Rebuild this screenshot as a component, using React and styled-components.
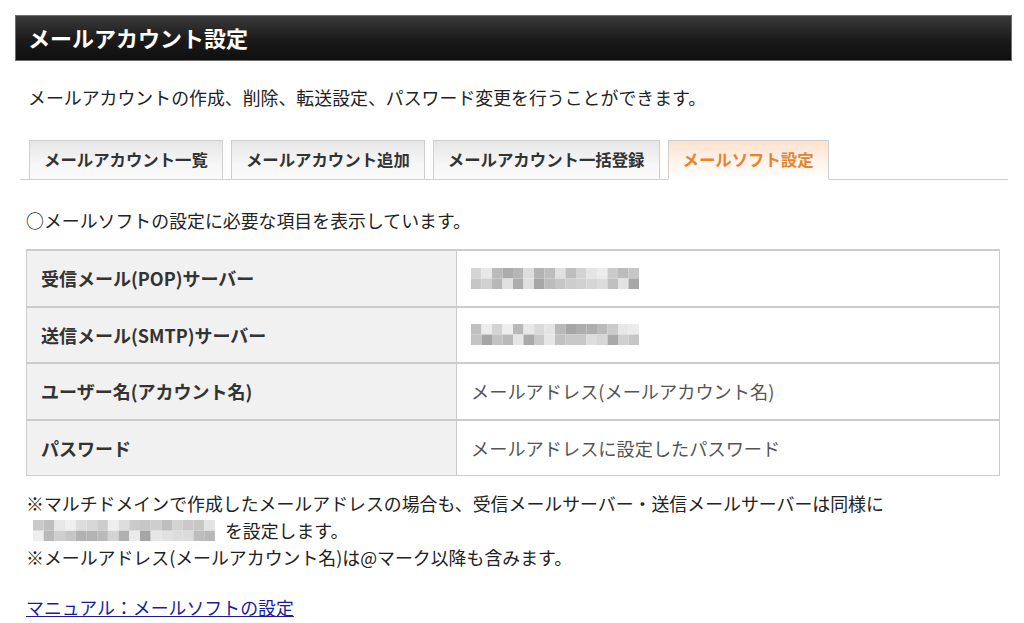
import React from 'react';
import styled, { createGlobalStyle } from 'styled-components';

const GlobalStyle = createGlobalStyle`
  body {
    margin: 0;
    background: #fff;
    font-family: "Noto Sans CJK JP", "Noto Sans", sans-serif;
    color: #333;
  }
`;

const Page = styled.div`
  width: 1024px;
  height: 623px;
  overflow: hidden;
  padding-top: 15px;
  box-sizing: border-box;
`;

const Header = styled.h1`
  margin: 0 12px 0 15px;
  height: 46px;
  box-sizing: border-box;
  border: 1px solid #6e6e6e;
  background: linear-gradient(#3a3a3a, #1a1a1a 55%, #0f0f0f);
  color: #fff;
  font-size: 22px;
  font-weight: 700;
  line-height: 43px;
  padding-left: 12px;
`;

const Lead = styled.p`
  margin: 23px 0 0 28px;
  font-size: 17.9px;
  line-height: 27px;
  color: #222;
`;

const TabBar = styled.div`
  display: flex;
  align-items: flex-end;
  gap: 8px;
  margin: 28px 16px 0 20px;
  padding-left: 9px;
  border-bottom: 1px solid #cfcfcf;
  height: 40px;
`;

const Tab = styled.div`
  height: 40px;
  box-sizing: border-box;
  padding: 0 14px;
  border: 1px solid #cfcfcf;
  border-bottom: ${p => (p.$active ? '1px solid #fff' : '1px solid #cfcfcf')};
  margin-bottom: -1px;
  background: ${p =>
    p.$active ? 'linear-gradient(#fde2cc, #fff5ee 60%, #fff)' : 'linear-gradient(#e6e6e6, #f6f6f6 60%, #fbfbfb)'};
  color: ${p => (p.$active ? '#e5842f' : '#333')};
  font-size: 16.4px;
  font-weight: 700;
  line-height: 37px;
  white-space: nowrap;
`;

const Content = styled.div`
  margin: 0 24px 0 26px;
`;

const Intro = styled.p`
  margin: 27px 0 0;
  font-size: 17.9px;
  line-height: 27px;
  color: #222;
`;

const Table = styled.table`
  margin-top: 15px;
  width: 974px;
  border-collapse: collapse;
  border: 1px solid #cccccc;
`;

const Label = styled.th`
  width: 401px;
  height: 54.5px;
  padding: 0 14px;
  background: #f1f1f1;
  border: 1px solid #cccccc;
  border-width: 2px 1px 0 1px;
  text-align: left;
  font-size: 18px;
  font-weight: 700;
  color: #333;
`;

const Value = styled.td`
  padding: 0 14px;
  border: 1px solid #cccccc;
  border-width: 2px 1px 0 1px;
  font-size: 18.2px;
  color: #555;
  background: #fff;
`;

const Notes = styled.div`
  margin-top: 14px;
  font-size: 17.9px;
  line-height: 27px;
  color: #222;
`;

const NoteLine = styled.div`
  display: flex;
  align-items: center;
  gap: ${p => (p.$gap ? '10px' : '0')};
  padding-left: ${p => (p.$indent ? '7px' : '0')};
`;

const ManualLink = styled.a`
  display: inline-block;
  margin-top: 23px;
  font-size: 17.9px;
  line-height: 27px;
  color: #1a1a9c;
  text-decoration: underline;
`;

const Blur = styled.svg`
  display: block;
  flex-shrink: 0;
`;

// pixelated (mosaic) placeholder for hidden host names
function Mosaic({ cols, rows, cell, seed }) {
  const rects = [];
  let s = seed;
  for (let r = 0; r < rows; r++) {
    for (let c = 0; c < cols; c++) {
      s = (s * 9301 + 49297) % 233280;
      const v = 165 + Math.floor((s / 233280) * 75);
      rects.push(
        <rect key={r + '-' + c} x={c * cell} y={r * cell} width={cell} height={cell} fill={`rgb(${v},${v},${v})`} />
      );
    }
  }
  return (
    <Blur width={cols * cell} height={rows * cell}>
      {rects}
    </Blur>
  );
}

const rows = [
  { label: '受信メール(POP)サーバー', blur: 11 },
  { label: '送信メール(SMTP)サーバー', blur: 29 },
  { label: 'ユーザー名(アカウント名)', text: 'メールアドレス(メールアカウント名)' },
  { label: 'パスワード', text: 'メールアドレスに設定したパスワード' },
];

export default function App() {
  return (
    <Page>
      <GlobalStyle />
      <Header>メールアカウント設定</Header>
      <Lead>メールアカウントの作成、削除、転送設定、パスワード変更を行うことができます。</Lead>
      <TabBar>
        <Tab>メールアカウント一覧</Tab>
        <Tab>メールアカウント追加</Tab>
        <Tab>メールアカウント一括登録</Tab>
        <Tab $active>メールソフト設定</Tab>
      </TabBar>
      <Content>
        <Intro>○メールソフトの設定に必要な項目を表示しています。</Intro>
        <Table>
          <tbody>
            {rows.map(r => (
              <tr key={r.label}>
                <Label>{r.label}</Label>
                <Value>{r.text ? r.text : <Mosaic cols={16} rows={2} cell={10.5} seed={r.blur} />}</Value>
              </tr>
            ))}
          </tbody>
        </Table>
        <Notes>
          <NoteLine>※マルチドメインで作成したメールアドレスの場合も、受信メールサーバー・送信メールサーバーは同様に</NoteLine>
          <NoteLine $indent $gap>
            <Mosaic cols={17} rows={2} cell={10.7} seed={57} />
            を設定します。
          </NoteLine>
          <NoteLine>※メールアドレス(メールアカウント名)は@マーク以降も含みます。</NoteLine>
        </Notes>
        <ManualLink href="#">マニュアル：メールソフトの設定</ManualLink>
      </Content>
    </Page>
  );
}
